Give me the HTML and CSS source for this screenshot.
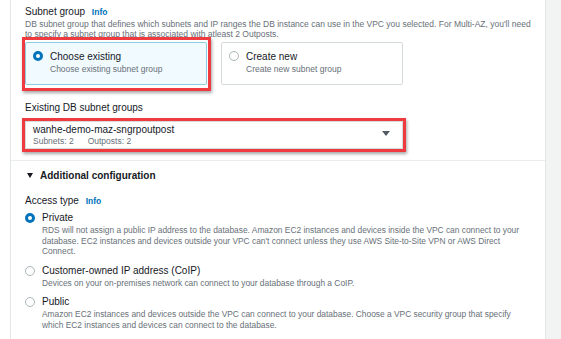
FILE: index.html
```html
<!DOCTYPE html>
<html lang="en">
<head>
<meta charset="utf-8">
<title>Subnet group</title>
<link rel="stylesheet" href="styles.css">
</head>
<body>
<div class="page">
  <main class="panel">
    <section class="field">
      <div class="label">Subnet group <span class="info">Info</span></div>
      <p class="desc desc-wide">DB subnet group that defines which subnets and IP ranges the DB instance can use in the VPC you selected. For Multi-AZ, you'll need to specify a subnet group that is associated with atleast 2 Outposts.</p>
      <div class="tiles">
        <div class="tile tile-selected annot annot-tile">
          <span class="radio radio-on"></span>
          <div class="tile-text">
            <div class="tile-title">Choose existing</div>
            <div class="tile-sub">Choose existing subnet group</div>
          </div>
        </div>
        <div class="tile">
          <span class="radio"></span>
          <div class="tile-text">
            <div class="tile-title">Create new</div>
            <div class="tile-sub">Create new subnet group</div>
          </div>
        </div>
      </div>
    </section>

    <section class="field field-select">
      <div class="label">Existing DB subnet groups</div>
      <div class="select annot annot-select">
        <div class="select-text">
          <div class="select-value">wanhe-demo-maz-sngrpoutpost</div>
          <div class="select-meta"><span>Subnets: 2</span><span>Outposts: 2</span></div>
        </div>
        <span class="caret"></span>
      </div>
    </section>

    <div class="divider"></div>

    <section class="expander">
      <div class="expander-head"><span class="tri"></span>Additional configuration</div>
      <div class="label">Access type <span class="info">Info</span></div>
      <div class="options">
        <div class="option">
          <span class="radio radio-on"></span>
          <div>
            <div class="option-title">Private</div>
            <p class="desc">RDS will not assign a public IP address to the database. Amazon EC2 instances and devices inside the VPC can connect to your database. EC2 instances and devices outside your VPC can't connect unless they use AWS Site-to-Site VPN or AWS Direct Connect.</p>
          </div>
        </div>
        <div class="option">
          <span class="radio"></span>
          <div>
            <div class="option-title">Customer-owned IP address (CoIP)</div>
            <p class="desc">Devices on your on-premises network can connect to your database through a CoIP.</p>
          </div>
        </div>
        <div class="option">
          <span class="radio"></span>
          <div>
            <div class="option-title">Public</div>
            <p class="desc">Amazon EC2 instances and devices outside the VPC can connect to your database. Choose a VPC security group that specify which EC2 instances and devices can connect to the database.</p>
          </div>
        </div>
      </div>
    </section>
  </main>
  <aside class="gutter"></aside>
</div>
</body>
</html>
```

FILE: styles.css
```css
* { box-sizing: border-box; }
html, body { margin: 0; padding: 0; }
body {
  font-family: "Liberation Sans", Arial, sans-serif;
  color: #16191f;
  background: #fff;
  width: 561px;
  height: 339px;
  overflow: hidden;
}
.page {
  display: flex;
  height: 339px;
  padding-left: 10px;
}
.panel {
  width: 536px;
  flex: none;
  background: #fff;
  border-left: 1px solid #e4e7e7;
  border-right: 1px solid #e4e7e7;
  padding: 4.5px 0 0 14px;
}
.gutter {
  flex: 1;
  background: #f2f3f3;
}
.label {
  font-size: 10px;
  line-height: 14px;
  color: #16191f;
}
.info {
  color: #0073bb;
  font-weight: 700;
  font-size: 8.5px;
  margin-left: 4px;
}
.desc {
  margin: 0;
  font-size: 8.5px;
  line-height: 10.5px;
  color: #687078;
}
.desc-wide { max-width: 512px; }
.tiles {
  display: flex;
  gap: 14px;
  margin-top: 2.75px;
}
.tile {
  position: relative;
  width: 182px;
  height: 43px;
  border: 1px solid #d5dbdb;
  border-radius: 2px;
  display: flex;
  align-items: flex-start;
  padding: 7px 0 0 7px;
  background: #fff;
}
.tile-selected {
  background: #f1faff;
  border-color: #8fcbe0;
}
.radio {
  width: 10px;
  height: 10px;
  border-radius: 50%;
  border: 1px solid #aab7b8;
  flex: none;
  background: #fff;
}
.radio-on {
  border: 3px solid #0073bb;
}
.tile .radio { margin-top: 1px; }
.tile-text { margin-left: 7px; }
.tile-title {
  font-size: 10px;
  line-height: 13px;
}
.tile-sub {
  font-size: 8.5px;
  line-height: 12px;
  color: #687078;
}
.annot::after {
  content: "";
  position: absolute;
  border: 3px solid #ef3a3f;
  box-shadow: 1px 2px 3px rgba(0,0,0,0.35);
  pointer-events: none;
}
.annot-tile::after {
  top: -6px; left: -4px; right: -5px; bottom: -7px;
}
.field-select { margin-top: 16px; }
.select {
  position: relative;
  width: 378px;
  height: 28px;
  margin-top: 6px;
  border: 1px solid #d5dbdb;
  display: flex;
  align-items: center;
  justify-content: space-between;
  padding: 0 12px 0 7px;
}
.annot-select::after {
  top: -4px; left: -4px; right: -4px; bottom: -4px;
}
.select-value {
  font-size: 10px;
  line-height: 12px;
}
.select-meta {
  font-size: 8.5px;
  line-height: 10px;
  color: #687078;
  display: flex;
  gap: 14px;
}
.caret {
  width: 0; height: 0;
  border-left: 4px solid transparent;
  border-right: 4px solid transparent;
  border-top: 5px solid #545b64;
  margin-top: -3px;
}
.divider {
  height: 1px;
  background: #eaeded;
  margin: 11px 0 0 -14px;
}
.expander { padding-top: 7.5px; }
.expander-head {
  font-size: 10px;
  font-weight: 700;
  line-height: 14px;
  color: #16191f;
  display: flex;
  align-items: center;
  margin-left: 2px;
}
.tri {
  width: 0; height: 0;
  border-left: 3.5px solid transparent;
  border-right: 3.5px solid transparent;
  border-top: 5px solid #16191f;
  margin-right: 7px;
}
.expander .label { margin-top: 11px; }
.options {
  display: flex;
  flex-direction: column;
  gap: 7px;
  margin-top: 3.5px;
}
.option {
  display: flex;
  gap: 7px;
}
.option .radio { margin-top: 2px; }
.option-title {
  font-size: 10px;
  line-height: 14px;
}
.option .desc { max-width: 488px; font-size: 8.4px; }
```
